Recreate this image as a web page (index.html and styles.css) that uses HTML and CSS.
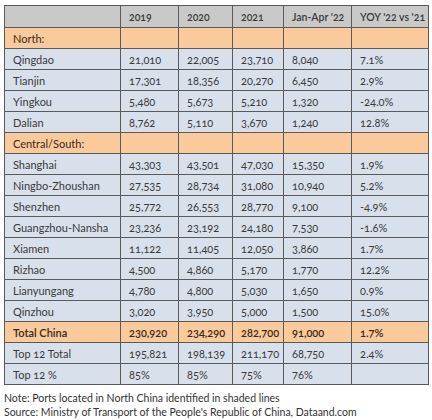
FILE: index.html
```html
<!DOCTYPE html>
<html lang="en">
<head>
<meta charset="UTF-8">
<title>Ports</title>
<link rel="stylesheet" href="styles.css">
</head>
<body>

<table class="ports">
    <colgroup>
        <col class="c-name">
        <col class="c-y">
        <col class="c-y2">
        <col class="c-y3">
        <col class="c-jan">
        <col class="c-yoy">
    </colgroup>
    <tr class="head">
        <th></th><th>2019</th><th>2020</th><th>2021</th><th>Jan-Apr '22</th><th>YOY '22 vs '21</th>
    </tr>
    <tr class="region"><td>North:</td><td></td><td></td><td></td><td></td><td></td></tr>
    <tr><td>Qingdao</td><td>21,010</td><td>22,005</td><td>23,710</td><td>8,040</td><td>7.1%</td></tr>
    <tr><td>Tianjin</td><td>17,301</td><td>18,356</td><td>20,270</td><td>6,450</td><td>2.9%</td></tr>
    <tr><td>Yingkou</td><td>5,480</td><td>5,673</td><td>5,210</td><td>1,320</td><td>-24.0%</td></tr>
    <tr><td>Dalian</td><td>8,762</td><td>5,110</td><td>3,670</td><td>1,240</td><td>12.8%</td></tr>
    <tr class="region"><td>Central/South:</td><td></td><td></td><td></td><td></td><td></td></tr>
    <tr><td>Shanghai</td><td>43,303</td><td>43,501</td><td>47,030</td><td>15,350</td><td>1.9%</td></tr>
    <tr><td>Ningbo-Zhoushan</td><td>27,535</td><td>28,734</td><td>31,080</td><td>10,940</td><td>5.2%</td></tr>
    <tr><td>Shenzhen</td><td>25,772</td><td>26,553</td><td>28,770</td><td>9,100</td><td>-4.9%</td></tr>
    <tr><td>Guangzhou-Nansha</td><td>23,236</td><td>23,192</td><td>24,180</td><td>7,530</td><td>-1.6%</td></tr>
    <tr><td>Xiamen</td><td>11,122</td><td>11,405</td><td>12,050</td><td>3,860</td><td>1.7%</td></tr>
    <tr><td>Rizhao</td><td>4,500</td><td>4,860</td><td>5,170</td><td>1,770</td><td>12.2%</td></tr>
    <tr><td>Lianyungang</td><td>4,780</td><td>4,800</td><td>5,030</td><td>1,650</td><td>0.9%</td></tr>
    <tr><td>Qinzhou</td><td>3,020</td><td>3,950</td><td>5,000</td><td>1,500</td><td>15.0%</td></tr>
    <tr class="total"><td>Total China</td><td>230,920</td><td>234,290</td><td>282,700</td><td>91,000</td><td>1.7%</td></tr>
    <tr><td>Top 12 Total</td><td>195,821</td><td>198,139</td><td>211,170</td><td>68,750</td><td>2.4%</td></tr>
    <tr><td>Top 12 %</td><td>85%</td><td>85%</td><td>75%</td><td>76%</td><td></td></tr>
</table>

<p class="note">Note: Ports located in North China identified in shaded lines<br>
Source: Ministry of Transport of the People's Republic of China, Dataand.com</p>

</body>
</html>
```

FILE: styles.css
```css
body {
    margin: 0;
    padding: 5px 0 0 4px;
    background-color: #ffffff;
    font-family: Lato, "Open Sans", sans-serif;
    color: #3a3a3a;
}

.ports {
    border-collapse: collapse;
    width: 424px;
    table-layout: fixed;
    font-size: 11px;
    font-variant-numeric: oldstyle-nums;
}

.c-name { width: 116px; }
.c-y { width: 58px; }
.c-y2 { width: 54px; }
.c-y3 { width: 51px; }
.c-jan { width: 68px; }
.c-yoy { width: 77px; }

.ports td, .ports th {
    border: 1px solid #5a5a5a;
    height: 20px;
    padding: 0 0 0 8px;
    text-align: left;
    background-color: #d8e0ec;
    white-space: nowrap;
}

.ports tr.head th {
    height: 21px;
    background-color: #c9c9c9;
    font-weight: 600;
    font-size: 10.5px;
    color: #3a3a3a;
}

.ports tr.region td {
    background-color: #fac99c;
    color: #3a2a1a;
}

.ports tr.total td {
    background-color: #fac99c;
    font-weight: 600;
    color: #3a2a1a;
}

.note {
    margin: 6px 0 0 0;
    font-size: 10.5px;
    line-height: 14px;
    color: #333333;
}
```
